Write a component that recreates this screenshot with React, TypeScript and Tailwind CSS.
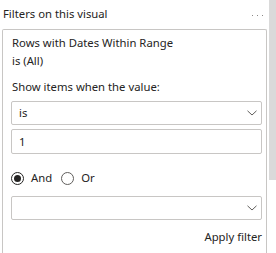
const font = { fontFamily: '"Noto Sans", "Open Sans", sans-serif' };

function Chevron() {
  return (
    <svg width="10" height="6" viewBox="0 0 10 6" className="text-[#605e5c]">
      <path d="M0.5 0.8 L5 5 L9.5 0.8" fill="none" stroke="currentColor" strokeWidth="1" />
    </svg>
  );
}

function Radio({ checked }: { checked?: boolean }) {
  return (
    <span
      className={`flex h-[13px] w-[13px] items-center justify-center rounded-full border ${
        checked ? "border-[#252423]" : "border-[#605e5c]"
      }`}
    >
      {checked && <span className="h-[7px] w-[7px] rounded-full bg-[#252423]" />}
    </span>
  );
}

export default function App() {
  return (
    <div
      className="flex h-[253px] w-[276px] overflow-hidden bg-white text-[11.3px] text-[#252423]"
      style={font}
    >
      <div className="flex w-[268px] flex-col">
        {/* Header */}
        <div className="flex h-[29px] items-center justify-between pb-px pl-[3px] pr-[5px]">
          <span className="leading-[18px]">Filters on this visual</span>
          <span className="mt-[3px] flex gap-[4px]">
            <span className="h-[1px] w-[1px] bg-[#8a8886]" />
            <span className="h-[1px] w-[1px] bg-[#8a8886]" />
            <span className="h-[1px] w-[1px] bg-[#8a8886]" />
          </span>
        </div>

        {/* Card */}
        <div className="ml-[2px] flex w-[265px] flex-1 flex-col rounded-t-[2px] border border-b-0 border-[#c8c6c4] pl-[8px] pr-[4px] pt-[4px]">
          <div className="pl-px leading-[18px]">Rows with Dates Within Range</div>
          <div className="pl-px leading-[18px]">is (All)</div>
          <div className="mt-[8px] pl-px leading-[18px]">Show items when the value:</div>

          <div className="mt-[5px] flex h-[24px] items-center justify-between rounded-[2px] border border-[#c8c6c4] pl-[7px] pr-[4px]">
            <span className="leading-[18px]">is</span>
            <Chevron />
          </div>
          <div className="mt-[4px] flex h-[25px] items-center rounded-[2px] border border-[#c8c6c4] pl-[7px]">
            <span className="leading-[18px]">1</span>
          </div>

          <div className="mt-[15px] flex h-[18px] items-center">
            <Radio checked />
            <span className="ml-[7px] leading-[18px]">And</span>
            <span className="ml-[9px]">
              <Radio />
            </span>
            <span className="ml-[7px] leading-[18px]">Or</span>
          </div>

          <div className="mt-[9px] flex h-[24px] items-center justify-end rounded-[2px] border border-[#c8c6c4] pr-[4px]">
            <Chevron />
          </div>

          <div className="mt-[8px] text-right leading-[18px]">Apply filter</div>
        </div>
      </div>

      {/* Scrollbar */}
      <div className="w-[8px] pl-px">
        <div className="h-[180px] w-full bg-[#dadada]" />
      </div>
    </div>
  );
}
